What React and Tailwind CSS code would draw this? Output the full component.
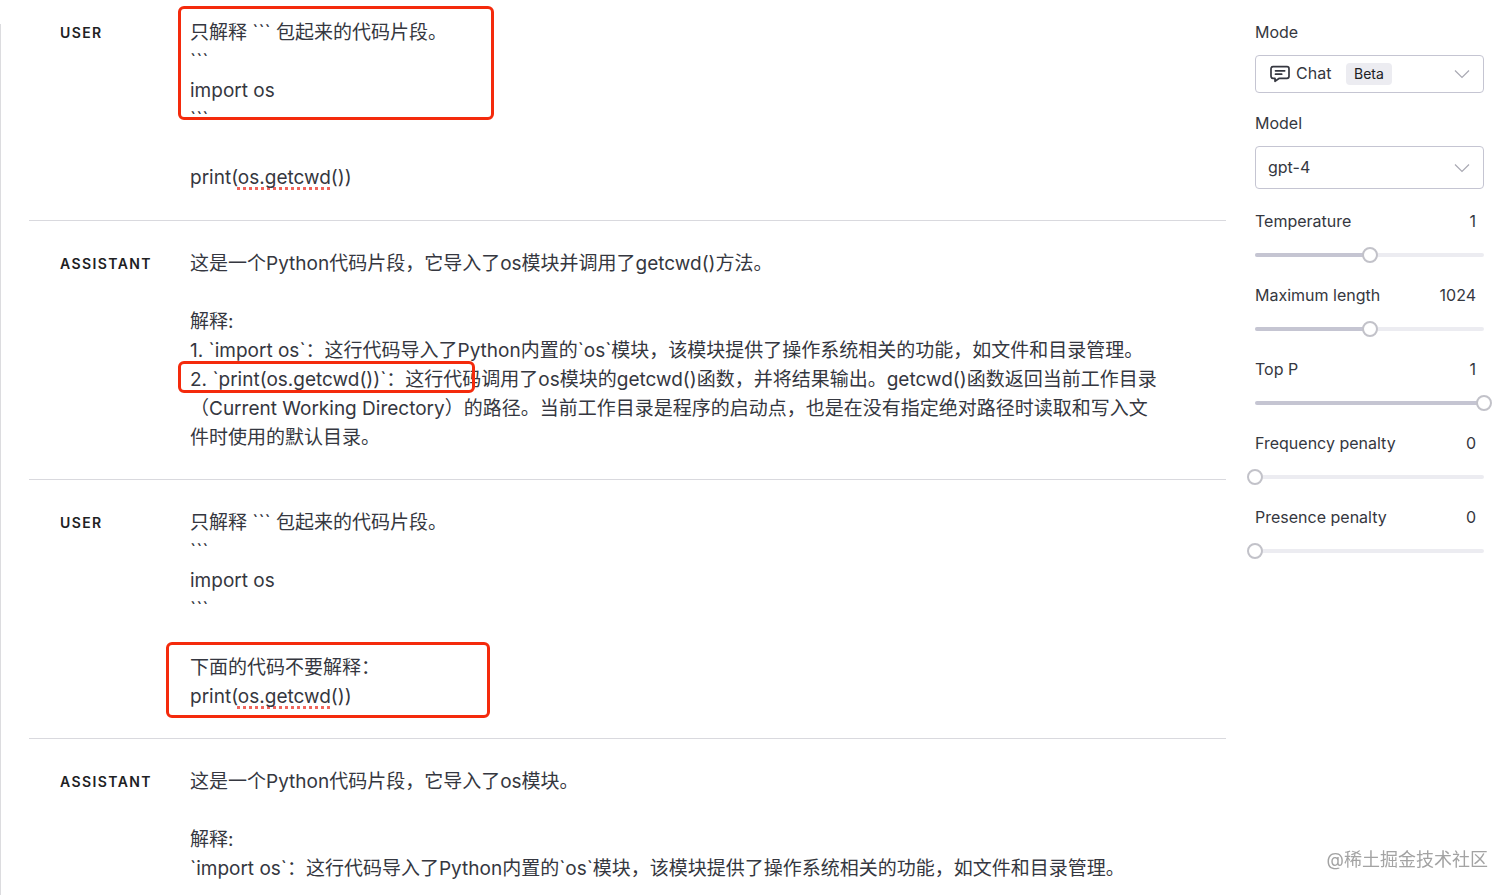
import { useState } from 'react'

const sliders = [
  { name: 'temperature', label: 'Temperature', min: 0, max: 2, step: 0.01, value: 1 },
  { name: 'maxLength', label: 'Maximum length', min: 0, max: 2048, step: 1, value: 1024 },
  { name: 'topP', label: 'Top P', min: 0, max: 1, step: 0.01, value: 1 },
  { name: 'frequencyPenalty', label: 'Frequency penalty', min: 0, max: 2, step: 0.01, value: 0 },
  { name: 'presencePenalty', label: 'Presence penalty', min: 0, max: 2, step: 0.01, value: 0 },
]

export default function App() {
  const [mode, setMode] = useState('chat')
  const [model, setModel] = useState('gpt-4')
  const [params, setParams] = useState(
    Object.fromEntries(sliders.map((s) => [s.name, s.value]))
  )

  const handleParam = (e) => {
    const { name, value } = e.target
    setParams((prev) => ({ ...prev, [name]: Number(value) }))
  }

  return (
    <div className="h-screen overflow-hidden bg-white text-[#353740] font-['Inter','Noto_Sans_CJK_SC',sans-serif]">
      <div className="flex h-full">
        <div className="mt-6 w-px shrink-0 bg-[#dcdcdf]" />

        {/* Conversation */}
        <main className="ml-7 min-w-0 flex-1">
          <Message role="User" first>
            <p>只解释 ``` 包起来的代码片段。</p>
            <p>```</p>
            <p>import os</p>
            <p>```</p>
            <p>&nbsp;</p>
            <p>print(<Misspelled>os.getcwd</Misspelled>())</p>
            <Mark className="-left-3 -top-3 h-[114px] w-[316px]" />
          </Message>

          <Message role="Assistant">
            <p>这是一个Python代码片段，它导入了os模块并调用了getcwd()方法。</p>
            <p>&nbsp;</p>
            <p>解释:</p>
            <p>1. `import os`：这行代码导入了Python内置的`os`模块，该模块提供了操作系统相关的功能，如文件和目录管理。</p>
            <p>2. `print(os.getcwd())`：这行代码调用了os模块的getcwd()函数，并将结果输出。getcwd()函数返回当前工作目录（Current Working Directory）的路径。当前工作目录是程序的启动点，也是在没有指定绝对路径时读取和写入文件时使用的默认目录。</p>
            <Mark className="-left-3 top-28 h-8 w-[297px]" />
          </Message>

          <Message role="User">
            <p>只解释 ``` 包起来的代码片段。</p>
            <p>```</p>
            <p>import os</p>
            <p>```</p>
            <p>&nbsp;</p>
            <p>下面的代码不要解释：</p>
            <p>print(<Misspelled>os.getcwd</Misspelled>())</p>
            <Mark className="-left-6 top-[134px] h-[76px] w-[324px]" />
          </Message>

          <Message role="Assistant">
            <p>这是一个Python代码片段，它导入了os模块。</p>
            <p>&nbsp;</p>
            <p>解释:</p>
            <p>`import os`：这行代码导入了Python内置的`os`模块，该模块提供了操作系统相关的功能，如文件和目录管理。</p>
          </Message>
        </main>

        {/* Settings */}
        <aside className="ml-[29px] mr-7 w-[229px] shrink-0 pt-5 text-[16px] leading-6">
          <label htmlFor="mode" className="block">Mode</label>
          <div className="relative mt-[11px]">
            <select
              id="mode"
              value={mode}
              onChange={(e) => setMode(e.target.value)}
              className="h-[38px] w-full appearance-none rounded border border-[#c5c5d2] bg-white pb-0.5 pl-10 text-[16px] outline-none"
            >
              <option value="chat">Chat</option>
              <option value="complete">Complete</option>
            </select>
            <ChatIcon className="pointer-events-none absolute left-[15px] top-[10px] h-[18px] w-5" />
            <span className="pointer-events-none absolute left-[91px] top-2 rounded bg-[#ececf1] px-2 text-[14px] leading-[22px] text-[#202123]">
              Beta
            </span>
            <Chevron />
          </div>

          <label htmlFor="model" className="mt-[18px] block">Model</label>
          <div className="relative mt-[11px]">
            <select
              id="model"
              value={model}
              onChange={(e) => setModel(e.target.value)}
              className="h-[43px] w-full appearance-none rounded border border-[#c5c5d2] bg-white pb-0.5 pl-3 text-[16px] outline-none"
            >
              <option value="gpt-4">gpt-4</option>
              <option value="gpt-3.5-turbo">gpt-3.5-turbo</option>
            </select>
            <Chevron />
          </div>

          <div className="mt-5 space-y-5">
            {sliders.map((s) => (
              <Slider key={s.name} {...s} value={params[s.name]} onChange={handleParam} />
            ))}
          </div>
        </aside>
      </div>

      <div className="pointer-events-none fixed bottom-5 right-6 text-[18px] leading-[30px] text-[#a3a3a3]">
        @稀土掘金技术社区
      </div>
    </div>
  )
}

function Message({ role, first, children }) {
  return (
    <section
      className={`flex border-b border-[#d9d9de] pl-[31px] ${first ? 'pb-7 pt-[18px]' : 'pb-[27px] pt-7'}`}
    >
      <h2 className="w-[130px] shrink-0 text-[14px] font-semibold uppercase leading-[29px] tracking-widest text-[#202123]">
        {role}
      </h2>
      <div className="relative mr-[66px] min-w-0 flex-1 text-[19px] leading-[29px]">{children}</div>
    </section>
  )
}

function Misspelled({ children }) {
  return (
    <span className="underline decoration-[#f0655c] decoration-dotted decoration-[3px] underline-offset-[3px] [text-decoration-skip-ink:none]">
      {children}
    </span>
  )
}

// Red highlight frame laid over a message
function Mark({ className }) {
  return (
    <div className={`pointer-events-none absolute rounded-md border-[3px] border-[#f42a0c] ${className}`} />
  )
}

function Slider({ name, label, min, max, step, value, onChange }) {
  const percent = ((value - min) / (max - min)) * 100

  return (
    <div>
      <div className="flex justify-between pr-2">
        <label htmlFor={name}>{label}</label>
        <output htmlFor={name}>{value}</output>
      </div>
      <div className="relative mt-[14px] flex h-4 items-center">
        <div className="h-1 w-full overflow-hidden rounded-full bg-[#ececf1]">
          <div className="h-full bg-[#c5c5d2]" style={{ width: `${percent}%` }} />
        </div>
        <input
          type="range"
          id={name}
          name={name}
          min={min}
          max={max}
          step={step}
          value={value}
          onChange={onChange}
          className="absolute -left-2 h-4 w-[calc(100%+16px)] cursor-pointer appearance-none bg-transparent outline-none [&::-webkit-slider-thumb]:h-4 [&::-webkit-slider-thumb]:w-4 [&::-webkit-slider-thumb]:appearance-none [&::-webkit-slider-thumb]:rounded-full [&::-webkit-slider-thumb]:border-2 [&::-webkit-slider-thumb]:border-[#c2c2c9] [&::-webkit-slider-thumb]:bg-white"
        />
      </div>
    </div>
  )
}

function Chevron() {
  return (
    <svg
      className="pointer-events-none absolute inset-y-0 right-[14px] my-auto h-4 w-4"
      viewBox="0 0 16 16"
      fill="none"
      stroke="#a9a9b3"
      strokeWidth="1.2"
    >
      <path d="M1 4.5l7 7 7-7" />
    </svg>
  )
}

function ChatIcon({ className }) {
  return (
    <svg
      className={className}
      viewBox="0 0 20 18"
      fill="none"
      stroke="currentColor"
      strokeWidth="1.7"
      strokeLinecap="round"
      strokeLinejoin="round"
    >
      <path d="M3 1.700h14a2 2 0 0 1 2 2v7.600a2 2 0 0 1-2 2H9.300L5 16.300v-3H3a2 2 0 0 1-2-2V3.700a2 2 0 0 1 2-2z" />
      <path d="M5.500 5.800h9.200M5.500 9.200h6.200" />
    </svg>
  )
}
